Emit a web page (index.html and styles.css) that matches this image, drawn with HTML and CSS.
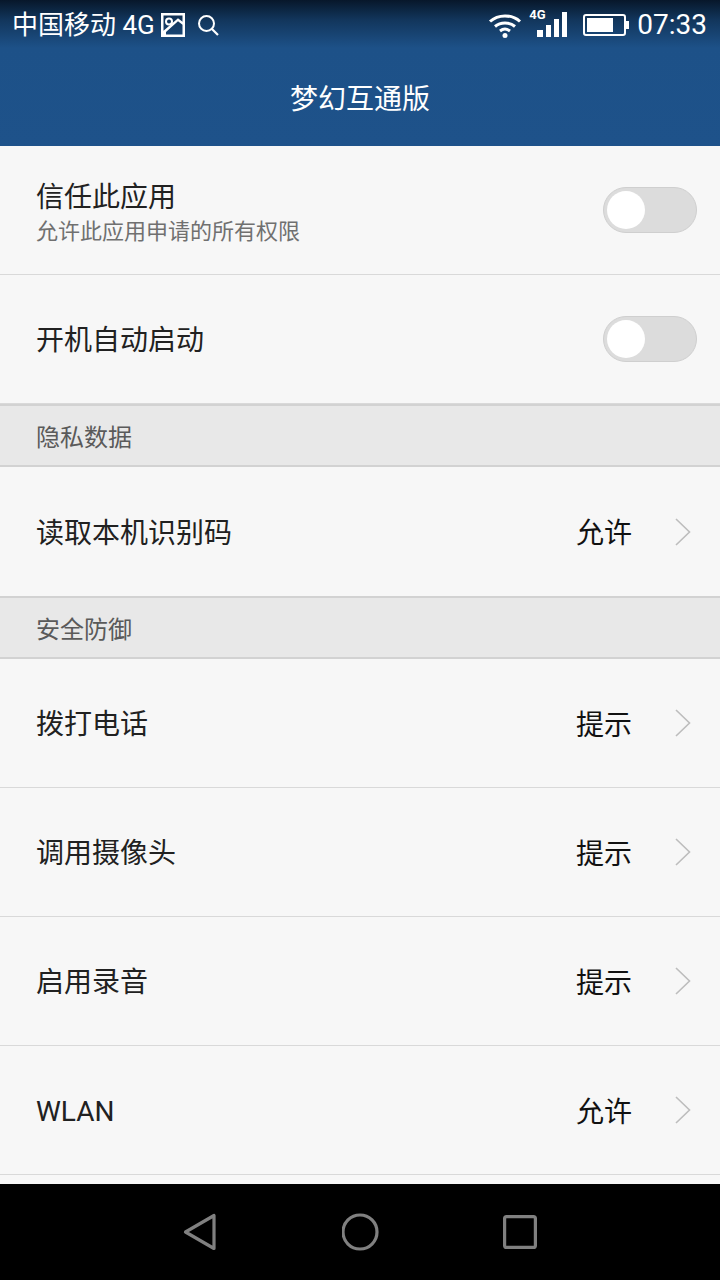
FILE: index.html
```html
<!DOCTYPE html>
<html lang="zh">
<head>
<meta charset="utf-8">
<title>梦幻互通版</title>
<link rel="stylesheet" href="styles.css">
</head>
<body>
<div class="app">
  <header class="top">
    <div class="status">
      <div class="status-left">
        <span class="carrier">中国移动 4G</span>
        <svg class="ico-pic" width="26" height="26" viewBox="0 0 26 26"><path fill="#fff" fill-rule="evenodd" d="M1 1h24v24H1zM3.500 3.500v15.200L18 6.200l4.500 3.600V3.500zM22.500 12.800 18 9.200 6 20v2.500h16.500z"/><circle cx="9" cy="9.500" r="3" fill="none" stroke="#fff" stroke-width="2"/></svg>
        <svg class="ico-search" width="24" height="24" viewBox="0 0 24 24"><circle cx="10.500" cy="10.500" r="7.500" fill="none" stroke="#fff" stroke-width="2"/><path d="M16 16l6 6" stroke="#fff" stroke-width="2.200" fill="none"/></svg>
      </div>
      <div class="status-right">
        <svg class="ico-wifi" width="34" height="26" viewBox="0 0 34 26"><g fill="none" stroke="#fff" stroke-width="3"><path d="M2 9.500C10 2 24 2 32 9.500"/><path d="M7 14.500c5.500-4.800 14.500-4.800 20 0"/><path d="M12 19c3-2.300 7-2.300 10 0"/></g><circle cx="17" cy="23.500" r="2.500" fill="#fff"/></svg>
        <div class="signal">
          <span class="net">4G</span>
          <svg width="30" height="26" viewBox="0 0 30 26"><path fill="#fff" d="M0 18h6v7H0zM9 13h5v12H9zM17 7h5v18h-5zM25 0h5v25h-5z"/></svg>
        </div>
        <svg class="ico-batt" width="46" height="24" viewBox="0 0 46 24"><rect x="1" y="2" width="41" height="20" rx="2" fill="none" stroke="#fff" stroke-width="2"/><rect x="4" y="5" width="26" height="14" fill="#fff"/><rect x="43" y="8" width="3" height="8" fill="#fff"/></svg>
        <span class="time">07:33</span>
      </div>
    </div>
    <h1 class="title">梦幻互通版</h1>
  </header>
  <main class="list">
    <div class="row">
      <div class="label-stack">
        <span class="label">信任此应用</span>
        <span class="sub">允许此应用申请的所有权限</span>
      </div>
      <span class="switch"><span class="knob"></span></span>
    </div>
    <div class="row">
      <span class="label">开机自动启动</span>
      <span class="switch"><span class="knob"></span></span>
    </div>
    <div class="section">隐私数据</div>
    <div class="row row-plain">
      <span class="label">读取本机识别码</span>
      <span class="value">允许</span>
      <svg class="chev" width="18" height="30" viewBox="0 0 18 30"><path d="M2 2l13.500 13L2 28" fill="none" stroke="#bdbdbd" stroke-width="1.600"/></svg>
    </div>
    <div class="section">安全防御</div>
    <div class="row">
      <span class="label">拨打电话</span>
      <span class="value">提示</span>
      <svg class="chev" width="18" height="30" viewBox="0 0 18 30"><path d="M2 2l13.500 13L2 28" fill="none" stroke="#bdbdbd" stroke-width="1.600"/></svg>
    </div>
    <div class="row">
      <span class="label">调用摄像头</span>
      <span class="value">提示</span>
      <svg class="chev" width="18" height="30" viewBox="0 0 18 30"><path d="M2 2l13.500 13L2 28" fill="none" stroke="#bdbdbd" stroke-width="1.600"/></svg>
    </div>
    <div class="row">
      <span class="label">启用录音</span>
      <span class="value">提示</span>
      <svg class="chev" width="18" height="30" viewBox="0 0 18 30"><path d="M2 2l13.500 13L2 28" fill="none" stroke="#bdbdbd" stroke-width="1.600"/></svg>
    </div>
    <div class="row">
      <span class="label">WLAN</span>
      <span class="value">允许</span>
      <svg class="chev" width="18" height="30" viewBox="0 0 18 30"><path d="M2 2l13.500 13L2 28" fill="none" stroke="#bdbdbd" stroke-width="1.600"/></svg>
    </div>
  </main>
  <nav class="nav">
    <svg width="36" height="38" viewBox="0 0 36 38"><path d="M2.500 19L31 2.500v33z" fill="none" stroke="#808080" stroke-width="3.200" stroke-linejoin="round"/></svg>
    <svg width="38" height="38" viewBox="0 0 38 38"><circle cx="18" cy="19" r="17" fill="none" stroke="#808080" stroke-width="3.200"/></svg>
    <svg width="34" height="34" viewBox="0 0 34 34"><rect x="1.600" y="1.600" width="30.800" height="30.800" rx="2" fill="none" stroke="#808080" stroke-width="3.200"/></svg>
  </nav>
</div>
</body>
</html>
```
FILE: styles.css
```css
* { box-sizing: border-box; }
html, body { margin: 0; padding: 0; }
body {
  background: #f7f7f7;
  font-family: Roboto, "Noto Sans CJK SC", sans-serif;
  color: #212121;
}
.app {
  width: 720px;
  height: 1280px;
  display: flex;
  flex-direction: column;
  overflow: hidden;
}
.top {
  height: 146px;
  flex: none;
  background: linear-gradient(#07172a 0, #12365c 20px, #1d5188 48px, #1e528a 100%);
  color: #fff;
}
.status {
  height: 50px;
  display: flex;
  justify-content: space-between;
  align-items: center;
  padding: 0 13px 0 12px;
}
.status-left, .status-right { display: flex; align-items: center; }
.carrier { font-size: 26px; line-height: 50px; white-space: nowrap; }
.ico-pic { margin-left: 5px; }
.ico-search { margin-left: 10px; }
.signal { display: flex; margin-left: 4px; position: relative; }
.signal svg { display: block; margin-left: 11px; }
.net {
  position: absolute;
  left: 3px;
  top: -4px;
  font-size: 13px;
  font-weight: 700;
  line-height: 14px;
}
.ico-batt { margin-left: 16px; }
.time { font-size: 28px; line-height: 50px; margin-left: 8px; }
.title {
  margin: 0;
  height: 96px;
  font-size: 28px;
  font-weight: 400;
  line-height: 100px;
  text-align: center;
}
.list {
  flex: 1;
  min-height: 0;
  background: #f7f7f7;
}
.row {
  height: 129px;
  display: flex;
  align-items: center;
  padding: 0 23px 0 36px;
  border-bottom: 1px solid #d9d9d9;
}
.row-plain { border-bottom: 0; }
.label-stack { display: flex; flex-direction: column; padding-top: 6px; }
.label { font-size: 28px; line-height: 36px; margin-right: auto; color: #212121; padding-top: 4px; }
.label-stack .label { padding-top: 0; }
.sub { font-size: 22px; line-height: 30px; color: #707070; padding-top: 1px; }
.label-stack + .switch { margin-left: auto; }
.switch {
  width: 94px;
  height: 46px;
  border-radius: 23px;
  background: #dcdcdc;
  border: 1px solid #cfcfcf;
  display: flex;
  align-items: center;
  padding-left: 3px;
}
.knob {
  width: 38px;
  height: 38px;
  border-radius: 50%;
  background: #fff;
}
.value { font-size: 28px; line-height: 36px; color: #111; margin-right: 42px; padding-top: 5px; }
.chev { flex: none; margin-right: 5px; }
.section {
  height: 63px;
  padding-left: 36px;
  background: #e8e8e8;
  border-top: 2px solid #d2d2d2;
  border-bottom: 2px solid #d2d2d2;
  font-size: 24px;
  line-height: 64px;
  color: #5a5a5a;
}
.nav {
  height: 96px;
  flex: none;
  background: #000;
  display: flex;
  align-items: center;
  justify-content: center;
  gap: 123px;
}
```
